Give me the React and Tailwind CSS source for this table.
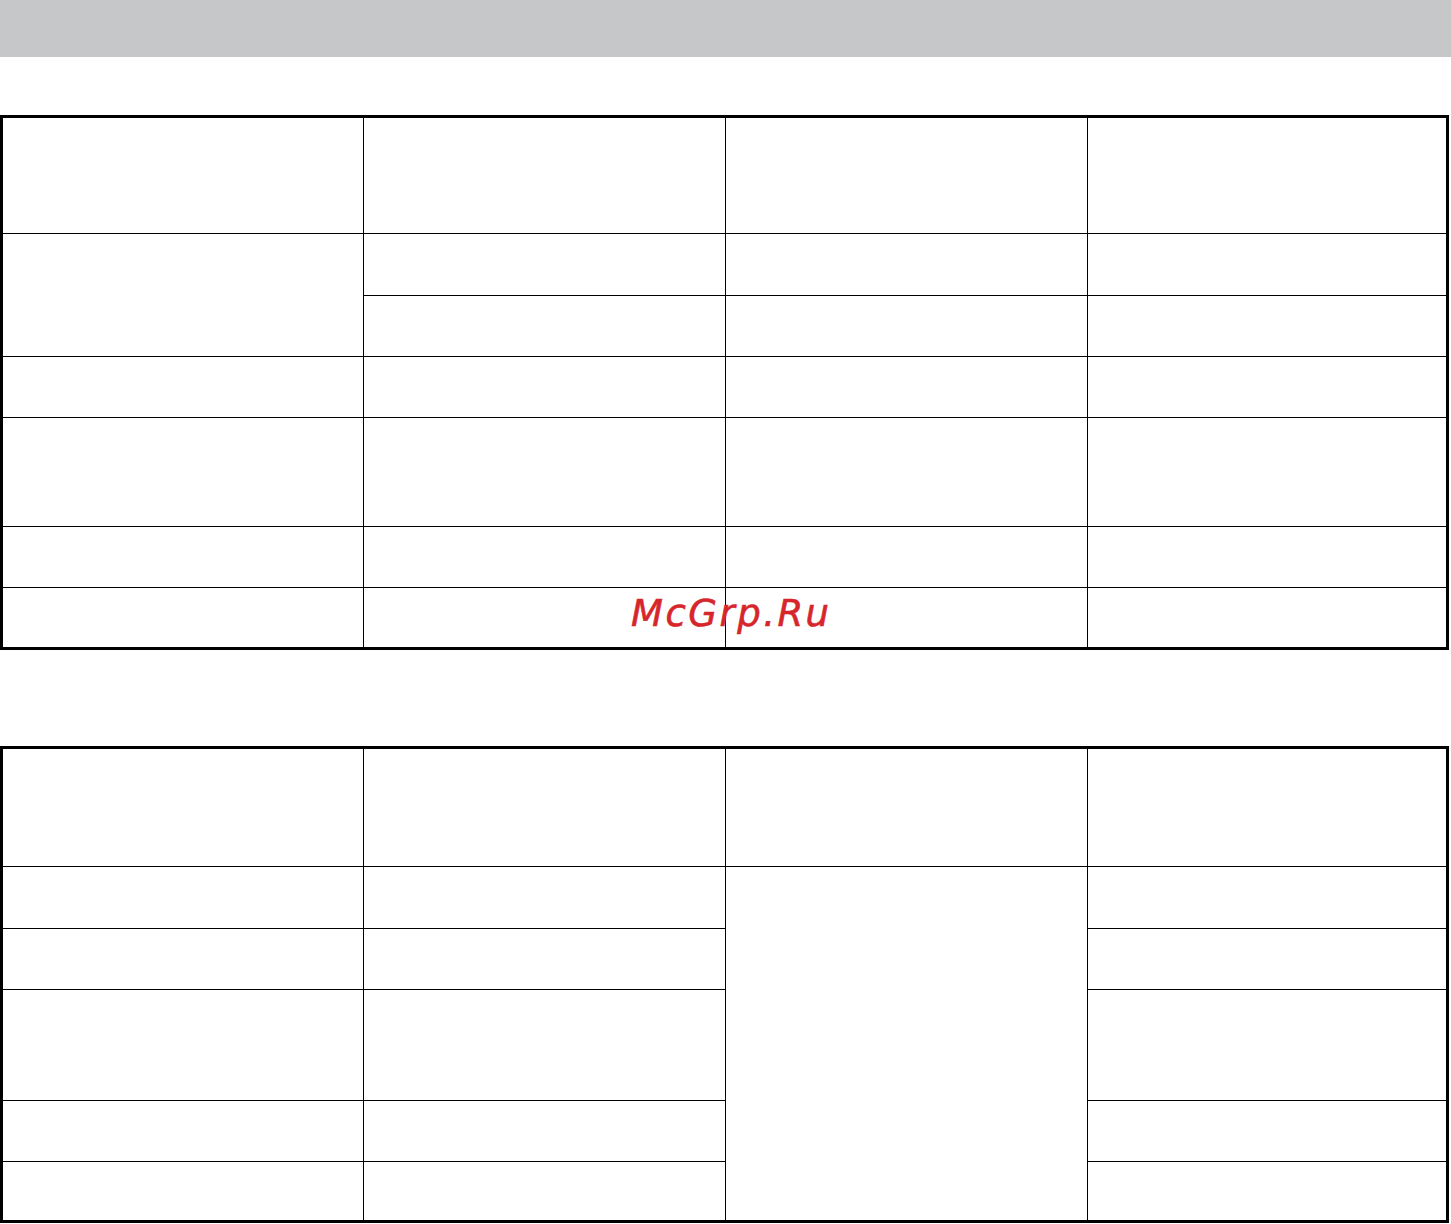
export default function App() {
  const cell = "bg-white";
  return (
    <div className="relative w-[1451px] h-[1224px] bg-white overflow-hidden" style={{ fontFamily: '"DejaVu Sans", sans-serif' }}>
      <div className="h-[57px] bg-[#c6c7c9]" />
      <div className="mt-[58px] w-[1449px] border-[3px] border-black bg-black">
        <div className="grid grid-cols-[360px_361px_361px_358px] grid-rows-[115px_61px_60px_60px_108px_60px_59px] gap-px">
          <div className={cell} />
          <div className={cell} />
          <div className={cell} />
          <div className={cell} />
          <div className={`${cell} row-span-2`} />
          <div className={cell} />
          <div className={cell} />
          <div className={cell} />
          <div className={cell} />
          <div className={cell} />
          <div className={cell} />
          {Array.from({ length: 16 }).map((_, i) => (
            <div key={i} className={cell} />
          ))}
        </div>
      </div>
      <div className="mt-[96px] w-[1449px] border-[3px] border-black bg-black">
        <div className="grid grid-cols-[360px_361px_361px_358px] grid-rows-[117px_61px_60px_110px_60px_58px] gap-px">
          <div className={cell} />
          <div className={cell} />
          <div className={cell} />
          <div className={cell} />
          <div className={cell} />
          <div className={cell} />
          <div className={`${cell} row-span-5`} />
          <div className={cell} />
          {Array.from({ length: 12 }).map((_, i) => (
            <div key={i} className={cell} />
          ))}
        </div>
      </div>
      <div
        className="absolute left-[631px] top-[595px] text-[37px] leading-[37px] italic tracking-[2.5px] text-[#d7262b] [-webkit-text-stroke:0.6px_#d7262b]"
        style={{ fontFamily: '"DejaVu Sans", sans-serif' }}
      >
        McGrp.Ru
      </div>
    </div>
  );
}
